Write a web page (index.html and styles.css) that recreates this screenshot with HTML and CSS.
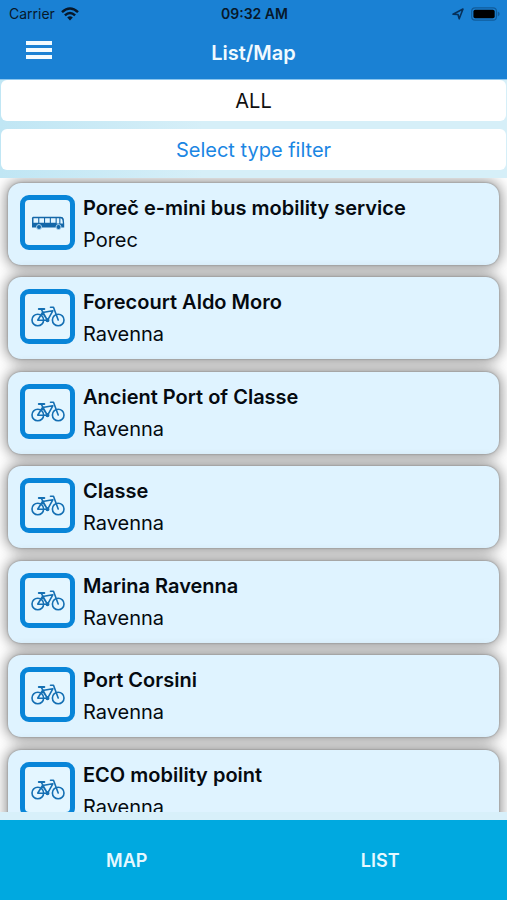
FILE: index.html
```html
<!DOCTYPE html>
<html lang="en">
<head>
<meta charset="utf-8">
<meta name="viewport" content="width=device-width, initial-scale=1">
<title>List/Map</title>
<link rel="stylesheet" href="styles.css">
</head>
<body>
<svg class="sprite" aria-hidden="true">
  <symbol id="bus" viewBox="0 0 34 14">
    <path d="M2 .8h27.500q2.800 0 3.300 2.200l.4 5v3.500H1V2.300Q1 .8 2 .8z" fill="#1467a8"/>
    <path d="M2.500 2.200h4.700v4.500H2.500zM8.300 2.200H13v4.500H8.300zM14.100 2.200h4.700v4.500h-4.700zM19.900 2.200h4.700v4.500h-4.700zM25.700 2.200h2.600v5.200h-2.600zM29.400 2.200q1.700.2 2 1.800l.5 3.400h-2.500z" fill="#e4f6ff"/>
    <g fill="#1467a8" stroke="#a9d3ee"><circle cx="8" cy="11" r="2.500"/><circle cx="27.500" cy="11" r="2.500"/></g>
  </symbol>
  <symbol id="bike" viewBox="0 0 34 22">
    <g fill="none" stroke="#146fb3" stroke-width="1.600" stroke-linecap="round" stroke-linejoin="round">
      <circle cx="6.800" cy="14" r="5.800"/><circle cx="27.200" cy="14" r="5.800"/>
      <path d="M6.800 14 11.500 6.500 16.500 14.300H6.800M11.500 6.500 21.800 4.800 16.500 14.300M10.300 3.300 16.500 14.300M19.500 1.200h3L27.200 14"/>
      <path d="M7.800 3h5.500" stroke-width="2"/>
      <circle cx="16.500" cy="14.300" r="1.200"/>
    </g>
  </symbol>
</svg>

<header class="top">
  <div class="status">
    <div class="status-side">
      <span>Carrier</span>
      <svg class="wifi" viewBox="0 0 18 14" aria-hidden="true"><g fill="none" stroke="#07182a" stroke-width="2.500"><path d="M1 5.200Q9-2.200 17 5.200"/><path d="M3.900 8.300Q9 3.600 14.100 8.300"/></g><path d="M6.200 10.500Q9 8.200 11.800 10.500L9 13.500z" fill="#07182a"/></svg>
    </div>
    <strong class="clock">09:32 AM</strong>
    <div class="status-side status-end">
      <svg class="location" viewBox="0 0 12 12" aria-hidden="true"><path d="M1 6.300 11 1 7.200 10.800 6 6.500z" fill="none" stroke="#07305a" stroke-width="1.600" stroke-linejoin="round"/></svg>
      <svg class="battery" viewBox="0 0 30 14" aria-hidden="true"><rect x=".7" y=".7" width="25.600" height="12.600" rx="3.500" fill="none" stroke="#115c9b" stroke-width="1.200"/><rect x="2.500" y="2.500" width="22" height="9" rx="1.800"/><path d="M27.700 4.500q2 1 2 2.500t-2 2.500z" fill="#115c9b"/></svg>
    </div>
  </div>
  <div class="titlebar">
    <button class="menu" type="button" aria-label="Menu"><span></span><span></span><span></span></button>
    <h1>List/Map</h1>
  </div>
</header>

<div class="filters">
  <button class="filter" type="button">ALL</button>
  <button class="filter filter-link" type="button">Select type filter</button>
</div>

<main class="list">
  <ul>
    <li class="card"><span class="icon"><svg class="bus" aria-hidden="true"><use href="#bus"/></svg></span><div><h2>Poreč e-mini bus mobility service</h2><p>Porec</p></div></li>
    <li class="card"><span class="icon"><svg class="bike" aria-hidden="true"><use href="#bike"/></svg></span><div><h2>Forecourt Aldo Moro</h2><p>Ravenna</p></div></li>
    <li class="card"><span class="icon"><svg class="bike" aria-hidden="true"><use href="#bike"/></svg></span><div><h2>Ancient Port of Classe</h2><p>Ravenna</p></div></li>
    <li class="card"><span class="icon"><svg class="bike" aria-hidden="true"><use href="#bike"/></svg></span><div><h2>Classe</h2><p>Ravenna</p></div></li>
    <li class="card"><span class="icon"><svg class="bike" aria-hidden="true"><use href="#bike"/></svg></span><div><h2>Marina Ravenna</h2><p>Ravenna</p></div></li>
    <li class="card"><span class="icon"><svg class="bike" aria-hidden="true"><use href="#bike"/></svg></span><div><h2>Port Corsini</h2><p>Ravenna</p></div></li>
    <li class="card"><span class="icon"><svg class="bike" aria-hidden="true"><use href="#bike"/></svg></span><div><h2>ECO mobility point</h2><p>Ravenna</p></div></li>
  </ul>
</main>

<nav class="tabs">
  <button type="button">MAP</button>
  <button type="button">LIST</button>
</nav>
</body>
</html>
```

FILE: styles.css
```css
* { box-sizing: border-box; }

body {
  margin: 0;
  height: 100vh;
  display: flex;
  flex-direction: column;
  background: #fff;
  color: #050a10;
  font-family: Inter, "Liberation Sans", sans-serif;
}

button { border: 0; font: inherit; cursor: pointer; }
h1, h2, p, ul { margin: 0; padding: 0; }
svg { display: block; }
.sprite { display: none; }

.top {
  background: #1a81d4;
  border-bottom: 1px solid #8cc6ee;
}

.status {
  display: grid;
  grid-template-columns: 1fr auto 1fr;
  align-items: center;
  height: 27px;
  padding: 0 7px 0 9px;
  font-size: 14px;
  color: #07182a;
}
.status-side { display: flex; align-items: center; gap: 6px; }
.status-end { justify-content: flex-end; gap: 7px; }
.clock { font-weight: 600; }
.wifi { width: 18px; height: 14px; }
.location { width: 12px; height: 12px; }
.battery { width: 29px; height: 14px; }

.titlebar {
  display: grid;
  grid-template-columns: 1fr auto 1fr;
  align-items: center;
  height: 52px;
  padding: 0 26px;
}
.titlebar h1 { color: #f0faff; font-size: 20px; font-weight: 600; line-height: 24px; }
.menu {
  display: grid;
  gap: 3px;
  width: 26px;
  padding: 0 0 6px;
  background: none;
}
.menu span { height: 4px; background: #f2fbff; }

.filters {
  display: grid;
  gap: 8px;
  padding: 0 1px 8px;
  background: linear-gradient(90deg, #c0e6f4, #d6eff8 40%);
}
.filter {
  height: 41px;
  padding: 0;
  border-radius: 6px;
  background: #fff;
  color: #101010;
  font-size: 20px;
}
.filter-link { color: #1b86e3; }

.list {
  flex: 1;
  min-height: 0;
  overflow: hidden;
  padding: 5px 8px 0;
}
.list ul { list-style: none; }

.card {
  display: flex;
  gap: 8px;
  height: 82px;
  margin-bottom: 12px;
  padding: 12px;
  border-radius: 13px;
  background: #dff3ff;
  box-shadow: 0 0 2px rgba(0, 0, 0, .35), 0 0 14px 2px rgba(0, 0, 0, .45);
}
.card:nth-child(even) { margin-bottom: 13px; }

.icon {
  display: grid;
  place-items: center;
  flex: none;
  width: 55px;
  height: 55px;
  border: 5px solid #0885d8;
  border-radius: 9px;
  background: #e4f6ff;
}
.bus { width: 34px; height: 14px; }
.bike { width: 34px; height: 22px; }

.card h2 { font-size: 20px; font-weight: 600; line-height: 26px; }
.card p { margin-top: 6px; font-size: 20px; line-height: 26px; }

.tabs {
  display: grid;
  grid-template-columns: 1fr 1fr;
  height: 88px;
  padding: 0;
  border-top: 8px solid #d8f0fa;
  background: #00a9e0;
}
.tabs button { padding: 0; background: none; color: #e6f8ff; font-size: 18px; font-weight: 600; }
```
